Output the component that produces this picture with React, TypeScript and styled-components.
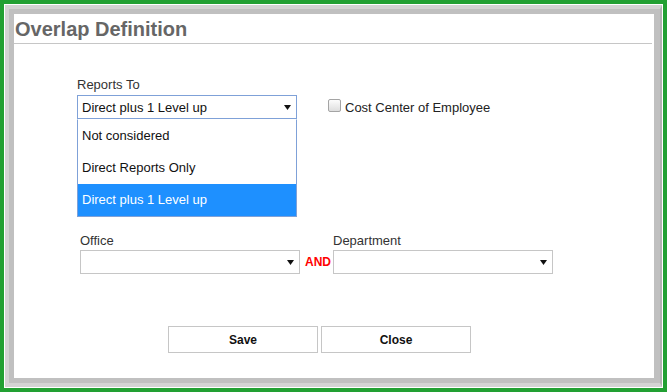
import React from 'react';
import styled, { createGlobalStyle } from 'styled-components';

const GlobalStyle = createGlobalStyle`
    html, body {
        margin: 0;
        padding: 0;
    }
    body {
        background: #22a033;
        font-family: 'Liberation Sans', Arial, sans-serif;
    }
    * {
        box-sizing: border-box;
    }
`;

const reportOptions = ['Not considered', 'Direct Reports Only', 'Direct plus 1 Level up'];

const Arrow = (): JSX.Element => (
    <svg width="7" height="5" viewBox="0 0 7 5">
        <path d="M0 0H7L3.5 5Z" fill="#111" />
    </svg>
);

const App = (): JSX.Element => {
    const selected = 'Direct plus 1 Level up';
    return (
        <>
            <GlobalStyle />
            <SPage>
                <SFrame>
                    <SShell>
                        <SDialog>
                            <STitle>Overlap Definition</STitle>
                            <SForm>
                                <SReportsRow>
                                    <SField>
                                        <SLabel>Reports To</SLabel>
                                        <SSelectWrap>
                                            <SSelect $focused>
                                                <span>{selected}</span>
                                                <Arrow />
                                            </SSelect>
                                            <SOptions>
                                                {reportOptions.map((opt) => (
                                                    <SOption key={opt} $active={opt === selected}>{opt}</SOption>
                                                ))}
                                            </SOptions>
                                        </SSelectWrap>
                                    </SField>
                                    <SCheckField>
                                        <SCheckbox />
                                        <span>Cost Center of Employee</span>
                                    </SCheckField>
                                </SReportsRow>
                                <SFilterRow>
                                    <SField>
                                        <SLabel $gap={2}>Office</SLabel>
                                        <SSelect>
                                            <span />
                                            <Arrow />
                                        </SSelect>
                                    </SField>
                                    <SAnd>AND</SAnd>
                                    <SField>
                                        <SLabel $gap={2}>Department</SLabel>
                                        <SSelect>
                                            <span />
                                            <Arrow />
                                        </SSelect>
                                    </SField>
                                </SFilterRow>
                                <SActions>
                                    <SButton type="button">Save</SButton>
                                    <SButton type="button">Close</SButton>
                                </SActions>
                            </SForm>
                        </SDialog>
                    </SShell>
                </SFrame>
            </SPage>
        </>
    );
};

const SPage = styled.div`
    width: 667px;
    height: 392px;
    padding: 4px;
    background: #22a033;
    display: flex;
`;

const SFrame = styled.div`
    flex: 1;
    display: flex;
    border: 1px solid #fff;
`;

const SShell = styled.div`
    flex: 1;
    display: flex;
    border-style: solid;
    border-color: #d3d3d3 #b2b2b2 #d3d3d3 #d3d3d3;
    border-width: 4px 2px 4px 4px;
`;

const SDialog = styled.div`
    flex: 1;
    display: flex;
    flex-direction: column;
    background: #fff;
    border: 5px solid #c0c0c0;
    border-right-width: 6px;
`;

const STitle = styled.h2`
    margin: 0 2px 0 0;
    padding: 3px 0 2px 1px;
    font-size: 20px;
    line-height: 24px;
    font-weight: bold;
    color: #666;
    border-bottom: 1px solid #c6c6c6;
`;

const SForm = styled.div`
    padding: 33px 0 0 63px;
    font-size: 13px;
    color: #222;
`;

const SReportsRow = styled.div`
    display: flex;
    align-items: flex-end;
    gap: 31px;
`;

const SField = styled.div`
    display: flex;
    flex-direction: column;
`;

const SLabel = styled.label<{ $gap?: number }>`
    font-size: 13px;
    line-height: 15px;
    color: #333;
    margin-bottom: ${(p) => p.$gap ?? 3}px;
`;

const SSelectWrap = styled.div`
    position: relative;
`;

const SSelect = styled.div<{ $focused?: boolean }>`
    width: 220px;
    height: 24px;
    display: flex;
    align-items: center;
    justify-content: space-between;
    padding: 0 5px 0 4px;
    border: 1px solid ${(p) => (p.$focused ? '#7fa1d8' : '#c6c6c6')};
    background: #fff;
    font-size: 13px;
    color: #111;
`;

const SOptions = styled.div`
    position: absolute;
    top: 24px;
    left: 0;
    width: 220px;
    background: #fff;
    border: 1px solid #7fa1d8;
    border-top-color: #fff;
    z-index: 2;
`;

const SOption = styled.div<{ $active?: boolean }>`
    height: 32px;
    line-height: 32px;
    padding-left: 4px;
    font-size: 13px;
    color: ${(p) => (p.$active ? '#fff' : '#111')};
    background: ${(p) => (p.$active ? '#1e90ff' : '#fff')};
`;

const SCheckField = styled.div`
    display: flex;
    align-items: center;
    height: 24px;
    font-size: 13px;
    line-height: 15px;
    color: #222;
`;

const SCheckbox = styled.span`
    width: 13px;
    height: 13px;
    margin: 0 4px 4px 0;
    border: 1px solid #a4a4a4;
    border-radius: 2px;
    background: linear-gradient(#fcfcfc, #dedede);
`;

const SFilterRow = styled.div`
    display: flex;
    align-items: flex-end;
    margin-top: 114px;
    padding-left: 3px;
`;

const SAnd = styled.span`
    height: 24px;
    line-height: 24px;
    margin: 0 2px 0 5px;
    font-size: 12px;
    font-weight: bold;
    color: #f00;
`;

const SActions = styled.div`
    display: flex;
    gap: 3px;
    margin: 52px 0 0 91px;
`;

const SButton = styled.button`
    width: 150px;
    height: 27px;
    padding: 0;
    border: 1px solid #c6c6c6;
    background: #fff;
    font-family: inherit;
    font-size: 12px;
    font-weight: bold;
    color: #111;
`;

export default App;
